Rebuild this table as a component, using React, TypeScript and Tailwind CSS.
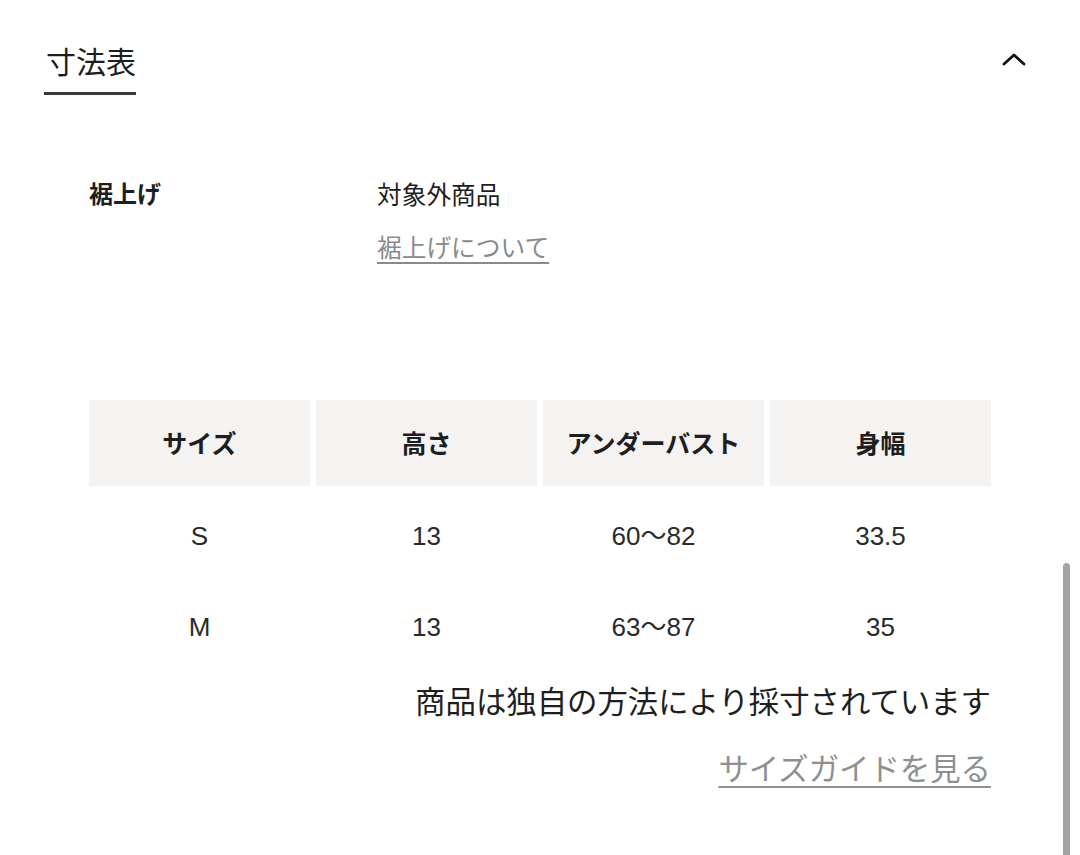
const headers = ["サイズ", "高さ", "アンダーバスト", "身幅"];
const rows = [
  ["S", "13", "60〜82", "33.5"],
  ["M", "13", "63〜87", "35"],
];

export default function App() {
  return (
    <div
      className="relative h-[855px] w-[1080px] overflow-hidden bg-white text-[#1e1e1e]"
      style={{ fontFamily: '"Noto Sans CJK JP", "Noto Sans", sans-serif' }}
    >
      {/* header */}
      <div className="flex items-start justify-between pl-[44px] pr-[54px] pt-[42px]">
        <div className="w-[92px] border-b-[3px] border-[#3a3a3a] pb-[14px] pl-[2px] text-[30px] leading-[36px]">
          寸法表
        </div>
        <svg width="24" height="14" viewBox="0 0 24 14" className="mt-[10px]">
          <path d="M2 12 L12 3 L22 12" fill="none" stroke="#111" strokeWidth="2.8" strokeLinecap="round" strokeLinejoin="round" />
        </svg>
      </div>

      <div className="pl-[89px] pr-[89px]">
        {/* hemming */}
        <div className="mt-[80px] flex leading-[36px]">
          <div className="w-[288px] text-[24px] font-bold">裾上げ</div>
          <div className="flex flex-col text-[24.7px]">
            <span>対象外商品</span>
            <a className="mt-[17px] text-[#8a8a8a] underline decoration-[1.5px] underline-offset-[5px]">裾上げについて</a>
          </div>
        </div>

        {/* table */}
        <div className="mt-[136px] w-[902px]">
          <div className="grid grid-cols-4 gap-[6px]">
            {headers.map((h) => (
              <div key={h} className="flex h-[86px] items-center justify-center bg-[#f4f3f2] text-[25px] font-bold">
                {h}
              </div>
            ))}
          </div>
          <div className="mt-[5px]">
            {rows.map((r) => (
              <div
                key={r[0]}
                className="grid h-[91px] grid-cols-4 gap-[6px] text-[26px] text-[#2a2a2a]"
                style={{ fontFamily: '"Liberation Sans", "Noto Sans CJK JP", sans-serif' }}
              >
                {r.map((c, i) => (
                  <div key={i} className="flex items-center justify-center">
                    {c}
                  </div>
                ))}
              </div>
            ))}
          </div>
          <div className="mt-[7px] flex flex-col items-end text-[30.4px] leading-[40px]">
            <span>商品は独自の方法により採寸されています</span>
            <a className="mt-[27px] text-[#8f8f8f] underline decoration-[2px] underline-offset-[6px]">サイズガイドを見る</a>
          </div>
        </div>
      </div>

      {/* scrollbar */}
      <div className="absolute left-[1063px] top-[563px] h-[300px] w-[7px] rounded-full bg-[#a3a3a3]" />
    </div>
  );
}
